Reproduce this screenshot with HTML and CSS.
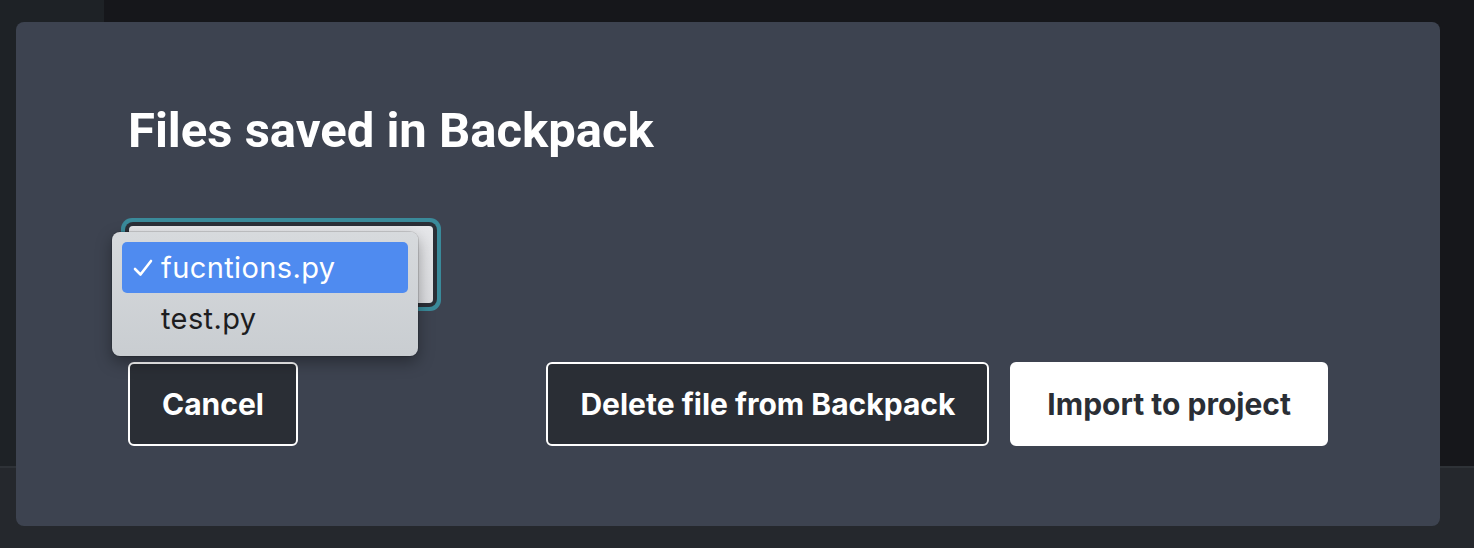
FILE: index.html
```html
<!DOCTYPE html>
<html>
	<head>
		<link rel="stylesheet" href="styles.css">
	</head>
	<body>
		<div class="backdrop">
			<div class="workspace">
				<div class="sidebar"></div>
				<div class="main"></div>
			</div>
			<div class="statusbar"></div>
		</div>

		<div class="modal">
			<h2 class="modal-title">Files saved in Backpack</h2>

			<div class="picker">
				<div class="select"></div>
				<ul class="menu">
					<li class="option selected">
						<svg class="check" width="20" height="18" viewBox="0 0 20 18">
							<path d="M2 10 L7.5 15.5 L18 2" fill="none" stroke="#fff" stroke-width="2.6" stroke-linecap="round" stroke-linejoin="round"/>
						</svg>
						fucntions.py
					</li>
					<li class="option">test.py</li>
				</ul>
			</div>

			<div class="actions">
				<button class="btn btn-dark">Cancel</button>
				<div class="actions-right">
					<button class="btn btn-dark">Delete file from Backpack</button>
					<button class="btn btn-light">Import to project</button>
				</div>
			</div>
		</div>
	</body>
</html>
```

FILE: styles.css
```css
html, body {
	margin: 0;
	padding: 0;
}

body {
	width: 1474px;
	height: 548px;
	overflow: hidden;
	position: relative;
	font-family: Inter, "Noto Sans", sans-serif;
	background: #25282d;
}

.backdrop {
	display: flex;
	flex-direction: column;
	height: 100%;
}

.workspace {
	display: flex;
	height: 466px;
}

.sidebar {
	width: 104px;
	background: #1e2226;
}

.main {
	flex: 1;
	background: #16171b;
}

.statusbar {
	flex: 1;
	background: #25282d;
	border-top: 2px solid #2e3237;
}

.modal {
	position: absolute;
	left: 16px;
	top: 22px;
	width: 1424px;
	height: 504px;
	box-sizing: border-box;
	padding: 0 112px;
	background: #3d4350;
	border-radius: 8px;
	color: #fff;
}

.modal-title {
	margin: 78px 0 0;
	font-family: Roboto, sans-serif;
	font-weight: 700;
	font-size: 49px;
	line-height: 62px;
	letter-spacing: 0;
}

.picker {
	position: relative;
	margin: 64px 0 0 1px;
	width: 304px;
	height: 77px;
}

.select {
	height: 100%;
	background: linear-gradient(#e6e7ea, #dcdde0);
	border-radius: 4px;
	box-shadow: 0 0 0 4px #2b2f37, 0 0 0 8px #3a8a9a;
}

.menu {
	position: absolute;
	left: -17px;
	top: 6px;
	width: 306px;
	box-sizing: border-box;
	margin: 0;
	padding: 10px 10px 12px;
	list-style: none;
	background: linear-gradient(#d7dadd, #c9cdd1);
	border-radius: 8px;
	box-shadow: 0 0 0 1px rgba(0, 0, 0, 0.12), 0 6px 16px rgba(0, 0, 0, 0.35);
}

.option {
	display: flex;
	align-items: center;
	height: 51px;
	padding-left: 39px;
	border-radius: 5px;
	font-family: Inter, sans-serif;
	font-size: 29px;
	letter-spacing: 0.4px;
	color: #1d1d1f;
}

.option.selected {
	position: relative;
	background: #4f8bf0;
	color: #fff;
}

.check {
	position: absolute;
	left: 11px;
	top: 17px;
}

.actions {
	display: flex;
	justify-content: space-between;
	margin-top: 59px;
}

.actions-right {
	display: flex;
	gap: 21px;
}

.btn {
	height: 84px;
	box-sizing: border-box;
	padding: 0 32px;
	border-radius: 6px;
	font-family: Inter, sans-serif;
	font-weight: 700;
	font-size: 30px;
	cursor: pointer;
}

.btn-dark {
	background: #2a2e35;
	color: #fff;
	border: 2px solid #fff;
}

.btn-light {
	background: #fff;
	color: #2a2e35;
	border: 2px solid #fff;
	padding: 0 35px;
}
```
